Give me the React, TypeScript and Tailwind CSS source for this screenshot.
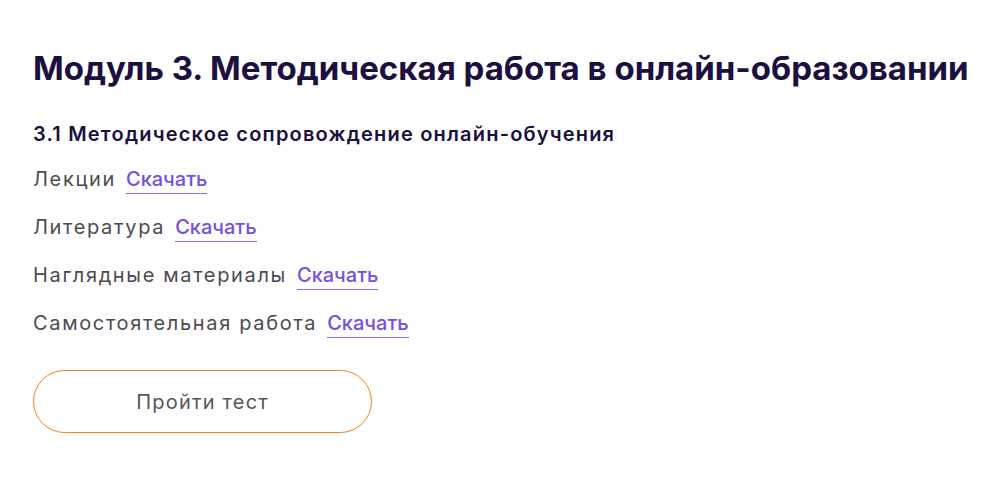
import React from "react";

const items = ["Лекции", "Литература", "Наглядные материалы", "Самостоятельная работа"];

export default function App() {
  return (
    <div className="min-h-screen bg-white font-['Inter','Noto_Sans',sans-serif]">
      <div className="flex flex-col items-start pl-[33px] pt-[48px]">
        <h1 className="text-[33px] leading-[40px] font-bold text-[#1c1040]">
          Модуль 3. Методическая работа в онлайн-образовании
        </h1>
        <h2 className="mt-[32px] text-[20px] leading-[28px] font-semibold tracking-[1.2px] text-[#1c1040]">
          3.1 Методическое сопровождение онлайн-обучения
        </h2>
        <div className="mt-[17px] flex flex-col gap-[19px]">
          {items.map((t) => (
            <div key={t} className="flex items-baseline gap-[10px] text-[20px] leading-[28px]">
              <span className="text-[#4b4b50] tracking-[1.65px]">{t}</span>
              <a href="#" className="text-[#7550e0] font-medium border-b border-[#8d6ce8]">
                Скачать
              </a>
            </div>
          ))}
        </div>
        <button className="mt-[32px] w-[339px] h-[63px] rounded-full border border-[#f5821f] text-[20px] tracking-[1.2px] text-[#55555a] flex items-center justify-center">
          Пройти тест
        </button>
      </div>
    </div>
  );
}
